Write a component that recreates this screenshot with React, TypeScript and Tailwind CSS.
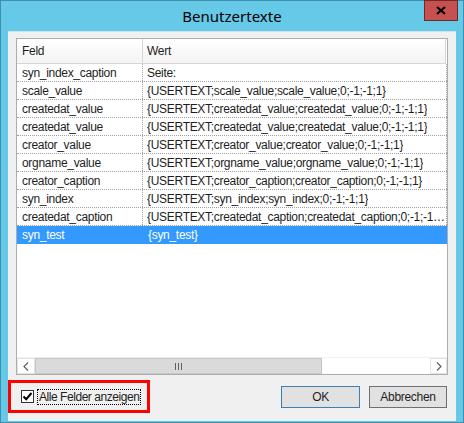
import React from "react";

const rows: [string, string][] = [
  ["syn_index_caption", "Seite:"],
  ["scale_value", "{USERTEXT;scale_value;scale_value;0;-1;-1;1}"],
  ["createdat_value", "{USERTEXT;createdat_value;createdat_value;0;-1;-1;1}"],
  ["createdat_value", "{USERTEXT;createdat_value;createdat_value;0;-1;-1;1}"],
  ["creator_value", "{USERTEXT;creator_value;creator_value;0;-1;-1;1}"],
  ["orgname_value", "{USERTEXT;orgname_value;orgname_value;0;-1;-1;1}"],
  ["creator_caption", "{USERTEXT;creator_caption;creator_caption;0;-1;-1;1}"],
  ["syn_index", "{USERTEXT;syn_index;syn_index;0;-1;-1;1}"],
  ["createdat_caption", "{USERTEXT;createdat_caption;createdat_caption;0;-1;-1;1}"],
  ["syn_test", "{syn_test}"],
];

const App: React.FC = () => {
  return (
    <div
      className="w-[464px] h-[423px] bg-[#66c9e8] border border-[#3d8fae] flex flex-col relative text-[#1e1e1e] tracking-[-0.3px]"
      style={{ fontFamily: '"Liberation Sans", Arial, sans-serif' }}
    >
      {/* title bar */}
      <div
        className="h-[30px] flex items-center justify-center text-[15px] text-black tracking-normal"
        style={{ fontFamily: '"Noto Sans", sans-serif' }}
      >
        Benutzertexte
      </div>
      <button className="absolute top-[-1px] right-[5px] w-[34px] h-[21px] bg-[#c75050] border border-[#6e2a2a] flex items-center justify-center">
        <svg width="10" height="9" viewBox="0 0 10 9">
          <path d="M1 1 L9 8 M9 1 L1 8" stroke="#000" strokeWidth="2.2" />
        </svg>
      </button>

      {/* client area */}
      <div className="mx-[7px] h-[390px] bg-[#f0f0f0] border-t border-[#cfe3ec] pt-[6px] flex flex-col">
        <div className="mx-[8px] h-[337px] bg-white border border-[#abadb3] flex flex-col text-[12px]">
          {/* header */}
          <div className="flex h-[25px] w-[430px]">
            <div className="w-[126px] border-r border-b border-[#d5d5d5] bg-gradient-to-b from-white to-[#f3f3f3] pl-[5px] flex items-center">
              Feld
            </div>
            <div className="w-[303px] border-r border-b border-[#d5d5d5] bg-gradient-to-b from-white to-[#f3f3f3] pl-[4px] flex items-center">
              Wert
            </div>
          </div>
          {/* rows */}
          <div className="flex-1">
            {rows.map(([k, v], i) => {
              const sel = i === rows.length - 1;
              return (
                <div
                  key={i}
                  className={
                    sel
                      ? "flex h-[18px] w-[430px] bg-[#3399ff] text-white"
                      : "flex h-[18px] w-[430px] border-b border-dotted border-[#a0a0a0]"
                  }
                >
                  <div
                    className={
                      sel
                        ? "w-[126px] pl-[5px] flex items-center"
                        : "w-[126px] pl-[5px] border-r border-dotted border-[#a0a0a0] flex items-center"
                    }
                  >
                    {k}
                  </div>
                  <div
                    className={
                      sel
                        ? "w-[304px] pl-[5px] flex items-center"
                        : "w-[304px] pl-[4px] border-r border-dotted border-[#a0a0a0] flex items-center overflow-hidden"
                    }
                  >
                    <span className="truncate">{v}</span>
                  </div>
                </div>
              );
            })}
          </div>
          {/* horizontal scrollbar */}
          <div className="h-[17px] flex border-t border-[#f0f0f0]">
            <div className="w-[18px] bg-white border border-[#e3e3e3] flex items-center justify-center">
              <svg width="6" height="9" viewBox="0 0 6 9">
                <path d="M5 0.5 L1 4.5 L5 8.5" fill="none" stroke="#606060" strokeWidth="1.2" />
              </svg>
            </div>
            <div className="w-[287px] bg-[#dadada] border border-[#c6c6c6] flex items-center justify-center">
              <div className="flex gap-[2px]">
                <div className="w-[1px] h-[7px] bg-[#606060]" />
                <div className="w-[1px] h-[7px] bg-[#606060]" />
                <div className="w-[1px] h-[7px] bg-[#606060]" />
              </div>
            </div>
            <div className="flex-1 bg-white" />
            <div className="w-[17px] bg-white border border-[#e3e3e3] flex items-center justify-center">
              <svg width="6" height="9" viewBox="0 0 6 9">
                <path d="M1 0.5 L5 4.5 L1 8.5" fill="none" stroke="#606060" strokeWidth="1.2" />
              </svg>
            </div>
          </div>
        </div>

        {/* bottom row */}
        <div className="mt-[5px] flex items-center pr-[9px] text-[12px]">
          <div className="w-[142px] h-[33px] border-[3px] border-[#ff0000] flex items-center pl-[10px]">
            <div className="w-[13px] h-[13px] shrink-0 border border-[#333333] bg-white flex items-center justify-center">
              <svg width="11" height="11" viewBox="0 0 11 11">
                <path d="M1.5 5.5 L4.2 8.2 L9.5 2" fill="none" stroke="#000" strokeWidth="2" />
              </svg>
            </div>
            <span className="ml-[3px] px-[1px] whitespace-nowrap border border-dotted border-black leading-[14px] tracking-[-0.45px]">
              Alle Felder anzeigen
            </span>
          </div>
          <div className="flex-1" />
          <button className="w-[79px] h-[22px] bg-[#e1e1e1] border border-[#3c7fb1] text-[12px]">
            OK
          </button>
          <button className="ml-[9px] w-[78px] h-[22px] bg-[#e1e1e1] border border-[#707070] text-[12px]">
            Abbrechen
          </button>
        </div>
      </div>
    </div>
  );
};

export default App;
